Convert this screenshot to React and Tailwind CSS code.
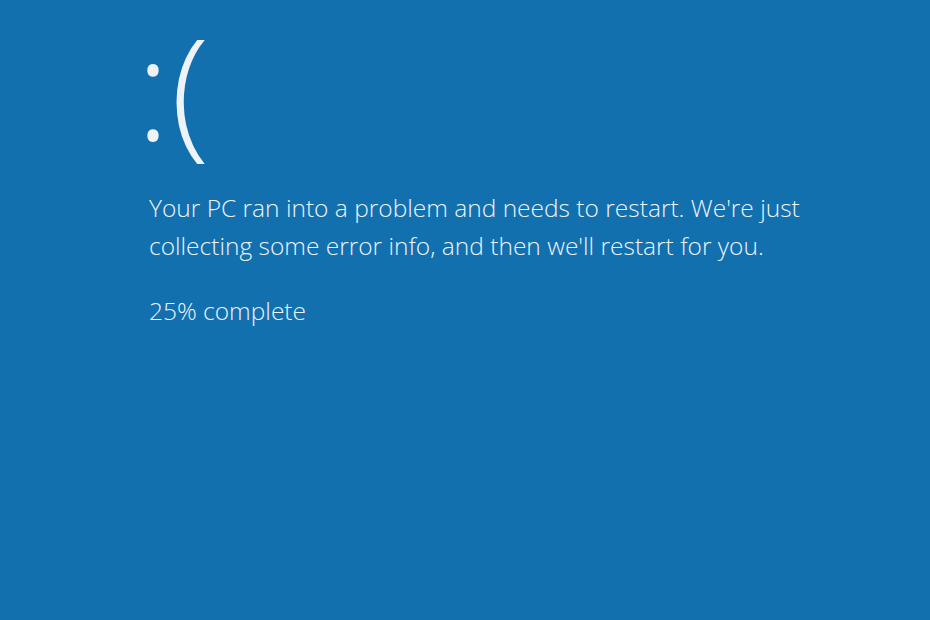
export default function App() {
  return (
    <div className="w-[930px] h-[620px] bg-[#1270af] text-[#eef3f8] overflow-hidden" style={{ fontFamily: '"Open Sans", "Noto Sans", sans-serif' }}>
      <div className="pl-[128px] pt-[1px] flex flex-col">
        <div className="self-start px-[8px] text-[142px] leading-[170px] font-light tracking-[1px]">:(</div>
        <p className="pl-[21px] mt-[18px] text-[24.5px] leading-[38px] font-light">
          Your PC ran into a problem and needs to restart. We're just
          <br />
          collecting some error info, and then we'll restart for you.
        </p>
        <p className="pl-[21px] mt-[31px] text-[24.5px] leading-[30px] font-light">25% complete</p>
      </div>
    </div>
  )
}
